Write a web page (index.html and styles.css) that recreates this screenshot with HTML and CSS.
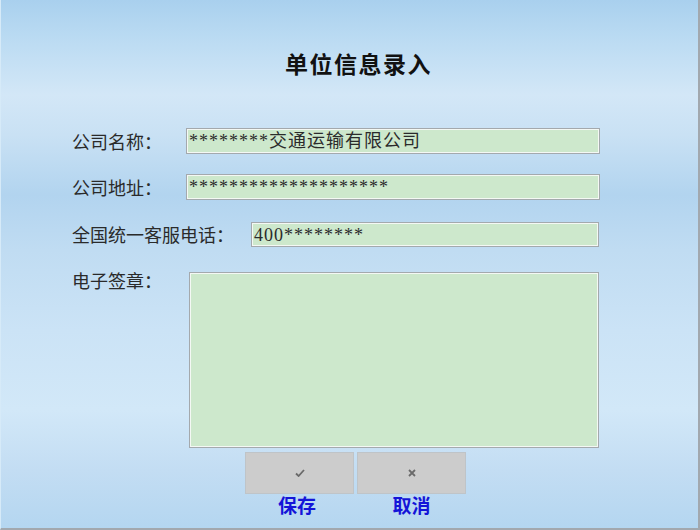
FILE: index.html
```html
<!DOCTYPE html>
<html lang="zh-CN">
<head>
    <meta charset="UTF-8">
    <meta name="viewport" content="width=device-width, initial-scale=1.0">
    <title>单位信息录入</title>
    <link rel="stylesheet" href="styles.css">
</head>
<body>
    <div class="window">
        <h1 class="title">单位信息录入</h1>

        <div class="form">
            <div class="row row-name">
                <label class="label">公司名称：</label>
                <div class="field">********交通运输有限公司</div>
            </div>
            <div class="row row-addr">
                <label class="label">公司地址：</label>
                <div class="field">********************</div>
            </div>
            <div class="row row-phone">
                <label class="label">全国统一客服电话：</label>
                <div class="field">400********</div>
            </div>
            <div class="row row-sign">
                <label class="label">电子签章：</label>
                <div class="field sign-box"></div>
            </div>
        </div>

        <div class="actions">
            <div class="action action-save">
                <div class="btn">
                    <svg width="10" height="8" viewBox="0 0 10 8"><path d="M1 4.5 L3.6 7 L9 1" fill="none" stroke="#6a6a6a" stroke-width="1.8"/></svg>
                </div>
                <span class="btn-text">保存</span>
            </div>
            <div class="action action-cancel">
                <div class="btn">
                    <svg width="8" height="8" viewBox="0 0 8 8"><path d="M1 1 L7 7 M7 1 L1 7" fill="none" stroke="#6a6a6a" stroke-width="1.8"/></svg>
                </div>
                <span class="btn-text">取消</span>
            </div>
        </div>
    </div>
</body>
</html>
```

FILE: styles.css
```css
* {
    box-sizing: border-box;
}
body {
    margin: 0;
    font-family: "Liberation Serif", "Noto Sans CJK SC", serif;
}
.window {
    width: 700px;
    height: 530px;
    border-left: 1px solid #d6eaf8;
    border-right: 2px solid #a2a8ae;
    border-bottom: 2px solid #a2a8ae;
    background: linear-gradient(to bottom,
        #a9d0ee 0px,
        #b9daf2 35px,
        #d3e7f7 95px,
        #c9e1f4 135px,
        #b2d4ef 195px,
        #c0dcf2 250px,
        #cbe3f6 330px,
        #d2e8f8 410px,
        #c3ddf3 470px,
        #b4d6f0 528px);
    overflow: hidden;
}
.title {
    margin: 0;
    padding-top: 51px;
    padding-left: 18px;
    text-align: center;
    font-size: 23px;
    line-height: 30px;
    font-weight: bold;
    color: #111;
    letter-spacing: 1.5px;
}
.form {
    padding-left: 71px;
    padding-top: 47px;
}
.row {
    display: flex;
    align-items: center;
}
.label {
    font-size: 18px;
    color: #2a2a2a;
    white-space: nowrap;
    flex-shrink: 0;
}
.field {
    background: #cde8cc;
    border: 1px solid #a4a9ad;
    box-shadow: inset 0 0 0 1px #f4f8f4;
    font-size: 18px;
    line-height: 24px;
    letter-spacing: 1px;
    color: #2b2b2b;
    padding-left: 2px;
    white-space: nowrap;
    overflow: hidden;
}
.row-name .label,
.row-addr .label {
    width: 114px;
}
.row-name .field,
.row-addr .field {
    width: 414px;
    height: 26px;
}
.row-addr {
    margin-top: 20px;
}
.row-phone {
    margin-top: 21px;
}
.row-phone .label {
    width: 179px;
}
.row-phone .field {
    width: 348px;
    height: 25px;
}
.row-sign {
    margin-top: 25px;
    align-items: flex-start;
}
.row-sign .label {
    width: 117px;
    line-height: 20px;
}
.sign-box {
    width: 410px;
    height: 176px;
}
.actions {
    display: flex;
    gap: 3px;
    padding-left: 244px;
    margin-top: 4px;
}
.action {
    display: flex;
    flex-direction: column;
    align-items: center;
    width: 109px;
}
.btn {
    width: 109px;
    height: 42px;
    background: #cccccc;
    border: 1px solid #bfc4c8;
    display: flex;
    align-items: center;
    justify-content: center;
}
.btn-text {
    margin-top: 2px;
    font-size: 19px;
    line-height: 22px;
    font-weight: bold;
    color: #1414d8;
}
.action-save .btn-text {
    margin-right: 5px;
}
```
